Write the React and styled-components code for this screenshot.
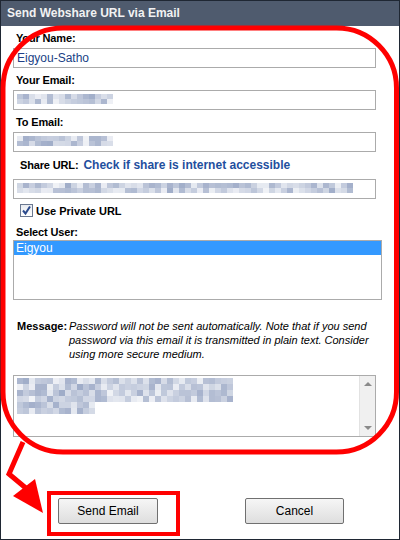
import React from 'react';
import styled, { createGlobalStyle } from 'styled-components';

const Global = createGlobalStyle`
  html, body { margin: 0; padding: 0; background: #fff; }
  body { font-family: "Liberation Sans", Arial, sans-serif; }
`;

function Pixels({ lengths, cw = 6, ch = 5, seed = 7, tint = '90,112,160' }) {
  let s = seed;
  const rnd = () => {
    s = (s * 9301 + 49297) % 233280;
    return s / 233280;
  };
  const cols = Math.max(...lengths);
  const cells = [];
  lengths.forEach((len, r) => {
    for (let c = 0; c < cols; c++) {
      const a = c < len ? 0.08 + rnd() * 0.5 : 0;
      cells.push(<Cell key={r + '-' + c} style={{ background: `rgba(${tint},${a.toFixed(2)})` }} />);
    }
  });
  return (
    <PixelGrid $cols={cols} $cw={cw} $ch={ch}>
      {cells}
    </PixelGrid>
  );
}

export default function App() {
  return (
    <>
      <Global />
      <Dialog>
        <TitleBar>Send Webshare URL via Email</TitleBar>
        <Body>
          <Field>
            <Label>Your Name:</Label>
            <Input>Eigyou-Satho</Input>
          </Field>
          <Field>
            <Label>Your Email:</Label>
            <Input>
              <Pixels lengths={[16, 16]} seed={11} />
            </Input>
          </Field>
          <Field>
            <Label>To Email:</Label>
            <Input>
              <Pixels lengths={[16, 16]} seed={23} />
            </Input>
          </Field>
          <Field>
            <ShareRow>
              <Label $inline>Share URL:</Label>
              <Link>Check if share is internet accessible</Link>
            </ShareRow>
            <Input>
              <Pixels lengths={[56, 56]} seed={5} />
            </Input>
          </Field>
          <CheckRow>
            <Box>
              <svg width="11" height="11" viewBox="0 0 11 11">
                <path d="M2 5.5 L4.5 8.5 L9 1.5" fill="none" stroke="#2b4a8c" strokeWidth="2" />
              </svg>
            </Box>
            <CheckText>Use Private URL</CheckText>
          </CheckRow>
          <Label $tight>Select User:</Label>
          <ListBox>
            <ListItem $selected>Eigyou</ListItem>
          </ListBox>
          <MessageRow>
            <MessageLabel>Message:</MessageLabel>
            <Note>
              Password will not be sent automatically. Note that if you send password via this
              email it is transmitted in plain text. Consider using more secure medium.
            </Note>
          </MessageRow>
          <TextArea>
            <Pixels lengths={[36, 36, 36, 36, 13, 13]} ch={6} seed={41} />
            <ScrollBar>
              <Arrow $up />
              <Arrow />
            </ScrollBar>
          </TextArea>
        </Body>
        <Footer>
          <Highlight>
            <Button>Send Email</Button>
          </Highlight>
          <Button $cancel>Cancel</Button>
        </Footer>
        <Overlay width="400" height="540" viewBox="0 0 400 540">
          <rect x="3" y="28" width="393.5" height="424" rx="60" fill="none" stroke="#f00" strokeWidth="5" />
          <polyline points="23,442 9,474 27,489" fill="none" stroke="#f00" strokeWidth="5" />
          <polygon points="13,496 35,479 43,513" fill="#f00" />
        </Overlay>
      </Dialog>
    </>
  );
}

const Dialog = styled.div`
  position: relative;
  box-sizing: border-box;
  width: 400px;
  height: 540px;
  border: 1px solid #1f2733;
  display: flex;
  flex-direction: column;
  background: #fff;
`;

const TitleBar = styled.div`
  height: 25px;
  line-height: 25px;
  padding-left: 6px;
  background: #4f5b6e;
  color: #f2f2f2;
  font-size: 12px;
  font-weight: bold;
`;

const Body = styled.div`
  padding: 5px 0 0 12px;
  display: flex;
  flex-direction: column;
`;

const Field = styled.div`
  display: flex;
  flex-direction: column;
  margin-bottom: 5px;
`;

const Label = styled.div`
  font-size: 11px;
  font-weight: bold;
  line-height: 15px;
  letter-spacing: -0.15px;
  padding-left: ${p => (p.$inline ? '7px' : '3px')};
  margin-bottom: ${p => (p.$inline || p.$tight ? '0' : '2px')};
  color: #000;
`;

const ShareRow = styled.div`
  display: flex;
  align-items: baseline;
  height: 21px;
  padding-top: 1px;
  gap: 5px;
`;

const Link = styled.span`
  font-size: 12px;
  font-weight: bold;
  color: #1f4f9e;
`;

const Input = styled.div`
  box-sizing: border-box;
  width: 363px;
  height: 20px;
  border: 1px solid #ababab;
  padding: 3px 0 0 3px;
  font-size: 12px;
  line-height: 13px;
  color: #203f86;
  overflow: hidden;
`;

const PixelGrid = styled.div`
  display: grid;
  grid-template-columns: repeat(${p => p.$cols}, ${p => p.$cw}px);
  grid-auto-rows: ${p => p.$ch}px;
`;

const Cell = styled.div``;

const CheckRow = styled.div`
  display: flex;
  align-items: center;
  gap: 3px;
  padding-left: 7px;
  margin: 0 0 8px;
`;

const Box = styled.div`
  box-sizing: border-box;
  width: 13px;
  height: 13px;
  border: 1px solid #6a7890;
  background: linear-gradient(#e8ebf0, #fff);
  display: flex;
  align-items: center;
  justify-content: center;
`;

const CheckText = styled.span`
  font-size: 11px;
  font-weight: bold;
`;

const ListBox = styled.div`
  box-sizing: border-box;
  width: 369px;
  height: 60px;
  border: 1px solid #ababab;
`;

const ListItem = styled.div`
  height: 14px;
  line-height: 14px;
  padding-left: 2px;
  font-size: 12px;
  color: ${p => (p.$selected ? '#fff' : '#000')};
  background: ${p => (p.$selected ? '#3399ff' : 'transparent')};
`;

const MessageRow = styled.div`
  display: flex;
  margin-top: 19px;
  font-size: 11px;
  line-height: 14px;
`;

const MessageLabel = styled.div`
  font-weight: bold;
  width: 52px;
  padding-left: 4px;
  flex: none;
`;

const Note = styled.div`
  font-style: italic;
  width: 300px;
`;

const TextArea = styled.div`
  position: relative;
  box-sizing: border-box;
  width: 363px;
  height: 62px;
  margin-top: 14px;
  border: 1px solid #ababab;
  padding: 2px 0 0 3px;
`;

const ScrollBar = styled.div`
  position: absolute;
  top: 0;
  right: 0;
  bottom: 0;
  width: 16px;
  background: #f0f0f0;
  border-left: 1px solid #e2e2e2;
  display: flex;
  flex-direction: column;
  justify-content: space-between;
  align-items: center;
  padding: 6px 0;
  box-sizing: border-box;
`;

const Arrow = styled.div`
  width: 0;
  height: 0;
  border-left: 4px solid transparent;
  border-right: 4px solid transparent;
  ${p => (p.$up ? 'border-bottom: 4px solid #8a8a8a;' : 'border-top: 4px solid #8a8a8a;')}
`;

const Footer = styled.div`
  margin-top: auto;
  display: flex;
  align-items: flex-start;
  padding: 0 0 3px 46px;
`;

const Highlight = styled.div`
  border: 4px solid #f00;
  padding: 3px 18px 8px 7px;
`;

const Button = styled.button`
  box-sizing: border-box;
  width: ${p => (p.$cancel ? '99px' : '100px')};
  height: 26px;
  margin: ${p => (p.$cancel ? '7px 0 0 65px' : '0')};
  border: 1px solid #707070;
  border-radius: 2px;
  background: linear-gradient(#f6f6f6, #dedede);
  font-family: "Liberation Sans", Arial, sans-serif;
  font-size: 12px;
  color: #000;
  padding: 0;
`;

const Overlay = styled.svg`
  position: absolute;
  left: -1px;
  top: -1px;
  pointer-events: none;
`;
